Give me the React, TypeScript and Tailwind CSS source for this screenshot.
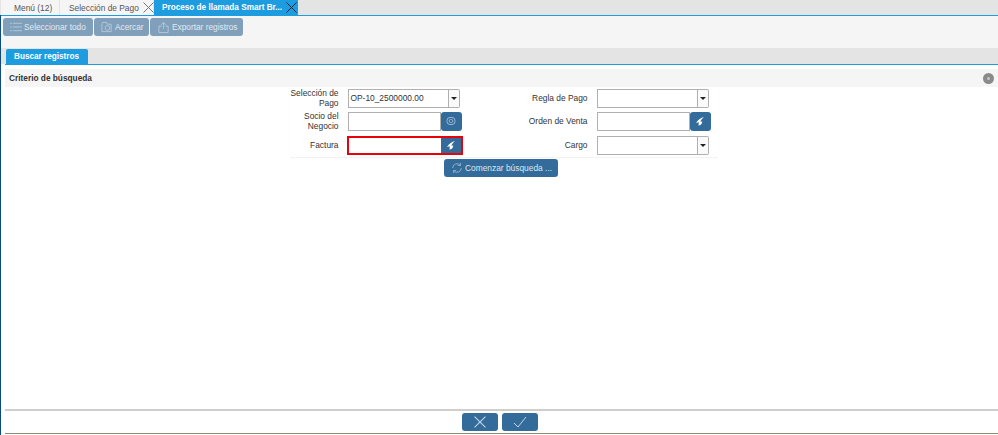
import React from "react";

function X({ c = "#555", s = 11 }: { c?: string; s?: number }) {
  return (
    <svg width={s} height={s} viewBox="0 0 11 11" className="shrink-0">
      <path d="M0.5 0.5L10.5 10.5M10.5 0.5L0.5 10.5" stroke={c} strokeWidth="1" fill="none" />
    </svg>
  );
}

function Bolt() {
  return (
    <svg width="10" height="10" viewBox="0 0 10 10">
      <path d="M9 1C6 1.5 3 3.5 1 7L3.8 6.2L3.5 9.5C5.5 9.5 7 8 7.3 5.5L5.4 5.8C5.8 4 7.5 2.2 9 1Z" fill="#fff" />
    </svg>
  );
}

function Combo({ value = "" }: { value?: string }) {
  return (
    <div className="flex h-[19px] w-[112px]">
      <div className="flex-1 overflow-hidden whitespace-nowrap border border-[#b0b0b0] bg-white pl-[2px] text-[8.4px] leading-[17px] text-[#333]">{value}</div>
      <div className="flex w-[11px] items-center justify-center rounded-r-[2px] border border-l-0 border-[#b0b0b0] bg-[#fafafa]">
        <div className="h-0 w-0 border-x-[3px] border-t-[3px] border-x-transparent border-t-[#222]" />
      </div>
    </div>
  );
}

function Search({ icon, red }: { icon: "bolt" | "at"; red?: boolean }) {
  return (
    <div className={red ? "-ml-[1px] flex h-[19px] w-[116px] border-2 border-[#e8000b]" : "flex h-[19px] w-[114px]"}>
      <div className={red ? "flex-1 bg-white" : "flex-1 border border-[#b0b0b0] bg-white"} />
      <div className={red ? "flex w-[20px] items-center justify-center bg-[#336b9b]" : "flex w-[21px] items-center justify-center rounded-[3px] bg-[#336b9b]"}>
        {icon === "bolt" ? (
          <Bolt />
        ) : (
          <svg width="10" height="10" viewBox="0 0 10 10" fill="none" stroke="#9db8d0" strokeWidth="1">
            <rect x="1" y="1.5" width="8" height="7" rx="3" />
            <rect x="3.2" y="3.5" width="3.6" height="3" rx="1.4" />
          </svg>
        )}
      </div>
    </div>
  );
}

function Label({ children }: { children: React.ReactNode }) {
  return <div className="pr-[9px] text-right text-[8.4px] leading-[10px] text-[#333]">{children}</div>;
}

function ToolBtn({ icon, text, w }: { icon: React.ReactNode; text: string; w: string }) {
  return (
    <div className={`${w} flex h-[18px] items-center gap-[2px] whitespace-nowrap rounded-[3px] bg-[#7f9fbb] pl-[7px] text-[8.3px] text-[#e3eaf0]`}>
      {icon}
      <span>{text}</span>
    </div>
  );
}

export default function App() {
  return (
    <div className="flex h-[435px] w-[998px] flex-col overflow-hidden bg-white font-['Liberation_Sans',Arial,sans-serif]">
      <div className="flex h-[15px] items-stretch whitespace-nowrap bg-[#e4e4e4] text-[8.4px] leading-[16px]">
        <div className="ml-[1px] w-[58px] bg-[#f5f5f5] pl-[13px] text-[#555]">Menú (12)</div>
        <div className="ml-[1px] flex w-[93px] items-center gap-[4px] bg-[#f5f5f5] pl-[9px] text-[#555]">
          <span>Selección de Pago</span>
          <X c="#777" />
        </div>
        <div className="ml-[1px] flex w-[144px] items-center gap-[4px] bg-[#1d9ce0] pl-[8px] text-[8.2px] font-bold text-white">
          <span>Proceso de llamada Smart Br...</span>
          <X c="#123" />
        </div>
      </div>
      <div className="flex min-h-0 flex-1 flex-col border-l border-[#0d4a80]">
        <div className="h-[33px] shrink-0 border-t border-[#1d9ce0] bg-[#f5f5f5]">
          <div className="flex gap-[1px] pl-[2px] pt-[2px]">
            <ToolBtn
              w="w-[90px]"
              text="Seleccionar todo"
              icon={
                <svg width="12" height="12" viewBox="0 0 13 12" stroke="#b7c9d8" strokeWidth="1">
                  <path d="M3 2H13M3 6H13M3 10H13M0 2H2M0 6H2M0 10H2" />
                </svg>
              }
            />
            <ToolBtn
              w="w-[55px]"
              text="Acercar"
              icon={
                <svg width="12" height="12" viewBox="0 0 13 12" fill="none" stroke="#b7c9d8" strokeWidth="1">
                  <path d="M1 3V11H11V3H7L6 1H2L1 3Z" />
                  <circle cx="7" cy="7" r="2.5" />
                </svg>
              }
            />
            <ToolBtn
              w="w-[93px]"
              text="Exportar registros"
              icon={
                <svg width="12" height="13" viewBox="0 0 13 13" fill="none" stroke="#b7c9d8" strokeWidth="1" className="ml-[1px]">
                  <path d="M4 5H1V12H11V5H8M6 8V1M3.5 3.5L6 1L8.5 3.5" />
                </svg>
              }
            />
          </div>
        </div>
        <div className="flex h-[16px] shrink-0 items-end bg-[#e4e4e4] pl-[5px]">
          <div className="h-[15px] w-[82px] rounded-t-[2px] bg-[#1d9ce0] pl-[8px] text-[8.2px] font-bold leading-[16px] text-white">Buscar registros</div>
        </div>
        <div className="ml-[4px] flex min-h-0 flex-1 flex-col">
          <div className="h-[1px] bg-[#1d9ce0]" />
          <div className="mt-[4px] flex h-[18px] items-center justify-between bg-[#f5f5f5] pl-[4px] pr-[4px]">
            <span className="text-[8.3px] font-bold text-[#333]">Criterio de búsqueda</span>
            <div className="flex h-[11px] w-[11px] items-center justify-center rounded-full bg-[#8a8a8a]">
              <div className="h-[3px] w-[3px] rounded-full bg-[#c5c5c5]" />
            </div>
          </div>
          <div className="flex flex-1 flex-col items-center">
            <div className="ml-[4px] grid w-[428px] grid-cols-[58px_125px_124px_121px] grid-rows-[22px_24px_24px] items-center shadow-[0_1px_1px_#f3f3f3]">
              <Label>Selección de Pago</Label>
              <Combo value="OP-10_2500000.00" />
              <Label>Regla de Pago</Label>
              <Combo />
              <Label>Socio del Negocio</Label>
              <Search icon="at" />
              <Label>Orden de Venta</Label>
              <Search icon="bolt" />
              <Label>Factura</Label>
              <Search icon="bolt" red />
              <Label>Cargo</Label>
              <Combo />
            </div>
            <div className="mr-[1px] mt-[2px] flex h-[18px] w-[114px] items-center gap-[2px] whitespace-nowrap rounded-[3px] bg-[#336b9b] pl-[7px] text-[8.4px] text-[#dde7ef]">
              <svg width="12" height="14" viewBox="0 0 14 14" fill="none" stroke="#9db8d0" strokeWidth="1">
                <path d="M2 7A5 5 0 0 1 11 4M12 7A5 5 0 0 1 3 10M11 1V4H8M3 13V10H6" />
              </svg>
              <span>Comenzar búsqueda ...</span>
            </div>
            <div className="flex-1" />
            <div className="h-[2px] w-full bg-[#cfcfc9]" />
            <div className="flex h-[22px] w-full items-center justify-center gap-[4px] pr-[3px]">
              <div className="flex h-[18px] w-[36px] items-center justify-center rounded-[3px] bg-[#336b9b]">
                <X c="#c5d5e3" s={12} />
              </div>
              <div className="flex h-[18px] w-[36px] items-center justify-center rounded-[3px] bg-[#336b9b]">
                <svg width="14" height="12" viewBox="0 0 14 12" fill="none" stroke="#c5d5e3" strokeWidth="1">
                  <path d="M1 7L5 11L13 1" />
                </svg>
              </div>
            </div>
            <div className="h-[1px] w-full bg-[#8a8a70]" />
            <div className="h-[1px]" />
          </div>
        </div>
      </div>
    </div>
  );
}
